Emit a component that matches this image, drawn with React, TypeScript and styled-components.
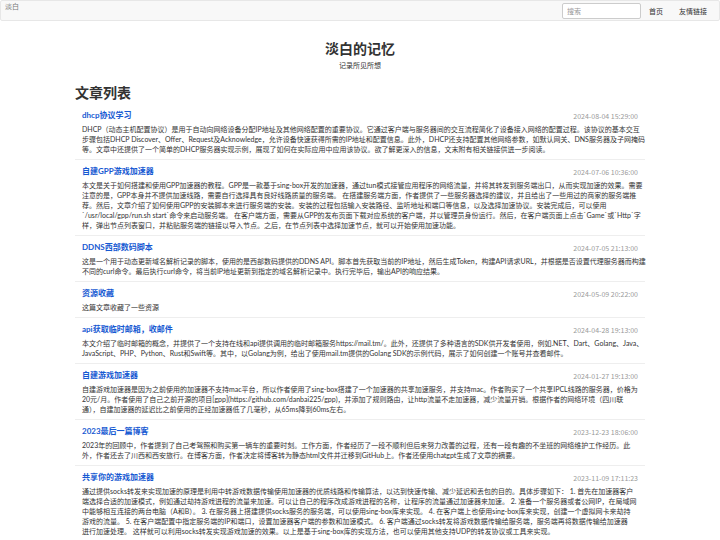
import React from "react";
import styled, { createGlobalStyle } from "styled-components";

const GlobalStyle = createGlobalStyle`
  *, *::before, *::after { box-sizing: border-box; }
  body {
    margin: 0;
    background: #fff;
    color: #333;
    font-family: "Noto Sans CJK SC", sans-serif;
    font-size: 7px;
    line-height: 10px;
  }
  h1, h2, h3, p, ul { margin: 0; padding: 0; }
  a { text-decoration: none; }
`;

const Navbar = styled.header`
  display: flex;
  justify-content: space-between;
  min-height: 21px;
  padding: 0 4px;
  background: #f8f8f8;
  border: 1px solid #e7e7e7;
  border-radius: 2px;
`;

const Brand = styled.a`
  color: #777;
`;

const Nav = styled.nav`
  display: flex;
  align-items: center;
`;

const SearchInput = styled.input`
  width: 79px;
  height: 16px;
  padding: 0 4px;
  background: #fff;
  border: 1px solid #ccc;
  border-radius: 2px;
  color: #555;
  font: inherit;
  &::placeholder { color: #999; opacity: 1; }
`;

const NavLink = styled.a`
  padding: 0 8px;
  color: #333;
`;

const Container = styled.main`
  max-width: 586px;
  margin: 0 auto;
  padding: 17px 8px 0;
`;

const Hero = styled.div`
  text-align: center;
`;

const SiteTitle = styled.h1`
  font-size: 14px;
  font-weight: 700;
  line-height: 20px;
`;

const Tagline = styled.p`
  margin-top: 2px;
`;

const SectionTitle = styled.h2`
  margin: 12px 0 2px;
  font-size: 14px;
  font-weight: 700;
  line-height: 20px;
`;

const PostList = styled.ul`
  list-style: none;
`;

const PostItem = styled.li`
  padding: 6px 7px 5px;
  border-bottom: 1px solid #eee;
`;

const PostHead = styled.div`
  display: flex;
  justify-content: space-between;
  align-items: flex-end;
  height: 11px;
  margin-bottom: 3px;
`;

const PostTitle = styled.h3`
  font-family: Lato, "Noto Sans CJK SC", sans-serif;
  font-size: 8px;
  font-weight: 700;
  line-height: 11px;
`;

const PostLink = styled.a`
  color: #1659d2;
`;

const PostDate = styled.time`
  color: #999;
  line-height: 9px;
`;

const Summary = styled.p`
  font-family: Lato, "Noto Sans CJK SC", sans-serif;
  white-space: pre-line;
  @media (min-width: 700px) {
    white-space: pre;
  }
`;

type Post = { title: string; date: string; lines: string[] };

const posts: Post[] = [
  {
    title: "dhcp协议学习",
    date: "2024-08-04 15:29:00",
    lines: [
      "DHCP（动态主机配置协议）是用于自动向网络设备分配IP地址及其他网络配置的重要协议。它通过客户端与服务器间的交互流程简化了设备接入网络的配置过程。该协议的基本交互",
      "步骤包括DHCP Discover、Offer、Request及Acknowledge，允许设备快速获得所需的IP地址和配置信息。此外，DHCP还支持配置其他网络参数，如默认网关、DNS服务器及子网掩码",
      "等。文章中还提供了一个简单的DHCP服务器实现示例，展现了如何在实际应用中应用该协议。欲了解更深入的信息，文末附有相关链接供进一步阅读。",
    ],
  },
  {
    title: "自建GPP游戏加速器",
    date: "2024-07-06 10:36:00",
    lines: [
      "本文是关于如何搭建和使用GPP加速器的教程。GPP是一款基于sing-box开发的加速器，通过tun模式接管应用程序的网络流量，并将其转发到服务端出口，从而实现加速的效果。需要",
      "注意的是，GPP本身并不提供加速线路，需要自行选择具有良好线路质量的服务端。 在搭建服务端方面，作者提供了一些服务器选择的建议，并且给出了一些用过的商家的服务端推",
      "荐。然后，文章介绍了如何使用GPP的安装脚本来进行服务端的安装。安装的过程包括输入安装路径、监听地址和端口等信息，以及选择加速协议。安装完成后，可以使用",
      "`/usr/local/gpp/run.sh start`命令来启动服务端。 在客户端方面，需要从GPP的发布页面下载对应系统的客户端，并以管理员身份运行。然后，在客户端页面上点击`Game`或`Http`字",
      "样，弹出节点列表窗口，并粘贴服务端的链接以导入节点。之后，在节点列表中选择加速节点，就可以开始使用加速功能。",
    ],
  },
  {
    title: "DDNS西部数码脚本",
    date: "2024-07-05 21:13:00",
    lines: [
      "这是一个用于动态更新域名解析记录的脚本，使用的是西部数码提供的DDNS API。脚本首先获取当前的IP地址，然后生成Token，构建API请求URL，并根据是否设置代理服务器而构建",
      "不同的curl命令。最后执行curl命令，将当前IP地址更新到指定的域名解析记录中。执行完毕后，输出API的响应结果。",
    ],
  },
  {
    title: "资源收藏",
    date: "2024-05-09 20:22:00",
    lines: ["这篇文章收藏了一些资源"],
  },
  {
    title: "api获取临时邮箱，收邮件",
    date: "2024-04-28 19:13:00",
    lines: [
      "本文介绍了临时邮箱的概念，并提供了一个支持在线和api提供调用的临时邮箱服务https://mail.tm/。此外，还提供了多种语言的SDK供开发者使用，例如.NET、Dart、Golang、Java、",
      "JavaScript、PHP、Python、Rust和Swift等。其中，以Golang为例，给出了使用mail.tm提供的Golang SDK的示例代码，展示了如何创建一个账号并查看邮件。",
    ],
  },
  {
    title: "自建游戏加速器",
    date: "2024-01-27 19:13:00",
    lines: [
      "自建游戏加速器是因为之前使用的加速器不支持mac平台，所以作者使用了sing-box搭建了一个加速器的共享加速服务，并支持mac。作者购买了一个共享IPCL线路的服务器，价格为",
      "20元/月。作者使用了自己之前开源的项目[gpp](https://github.com/danbai225/gpp)，并添加了规则路由，让http流量不走加速器，减少流量开销。根据作者的网络环境（四川联",
      "通），自建加速器的延迟比之前使用的正经加速器低了几毫秒，从65ms降到60ms左右。",
    ],
  },
  {
    title: "2023最后一篇博客",
    date: "2023-12-23 18:06:00",
    lines: [
      "2023年的回顾中，作者提到了自己考驾照和购买第一辆车的重要时刻。工作方面，作者经历了一段不顺利但后来努力改善的过程，还有一段有趣的不坐班的网络维护工作经历。此",
      "外，作者还去了川西和西安旅行。在博客方面，作者决定将博客转为静态html文件并迁移到GitHub上。作者还使用chatgpt生成了文章的摘要。",
    ],
  },
  {
    title: "共享你的游戏加速器",
    date: "2023-11-09 17:11:23",
    lines: [
      "通过提供socks转发来实现加速的原理是利用中转游戏数据传输使用加速器的优质线路和传输算法，以达到快速传输、减少延迟和丢包的目的。具体步骤如下： 1. 首先在加速器客户",
      "端选择合适的加速模式，例如通过劫持游戏进程的流量来加速。可以让自己的程序改成游戏进程的名称，让程序的流量通过加速器来加速。 2. 准备一个服务器或者公网IP，在局域网",
      "中能够相互连接的两台电脑（A和B）。 3. 在服务器上搭建提供socks服务的服务端，可以使用sing-box库来实现。 4. 在客户端上也使用sing-box库来实现，创建一个虚拟网卡来劫持",
      "游戏的流量。 5. 在客户端配置中指定服务端的IP和端口，设置加速器客户端的参数和加速模式。 6. 客户端通过socks转发将游戏数据传输给服务端，服务端再将数据传输给加速器",
      "进行加速处理。 这样就可以利用socks转发实现游戏加速的效果。以上是基于sing-box库的实现方法，也可以使用其他支持UDP的转发协议或工具来实现。",
    ],
  },
];

export default function App() {
  return (
    <>
      <GlobalStyle />
      <Navbar>
        <Brand href="#">淡白</Brand>
        <Nav>
          <SearchInput type="text" placeholder="搜索" aria-label="搜索" />
          <NavLink href="#">首页</NavLink>
          <NavLink href="#links">友情链接</NavLink>
        </Nav>
      </Navbar>
      <Container>
        <Hero>
          <SiteTitle>淡白的记忆</SiteTitle>
          <Tagline>记录所见所想</Tagline>
        </Hero>
        <SectionTitle>文章列表</SectionTitle>
        <PostList>
          {posts.map((post) => (
            <PostItem key={post.title}>
              <PostHead>
                <PostTitle>
                  <PostLink href="#">{post.title}</PostLink>
                </PostTitle>
                <PostDate>{post.date}</PostDate>
              </PostHead>
              <Summary>{post.lines.join("\n")}</Summary>
            </PostItem>
          ))}
        </PostList>
      </Container>
    </>
  );
}
